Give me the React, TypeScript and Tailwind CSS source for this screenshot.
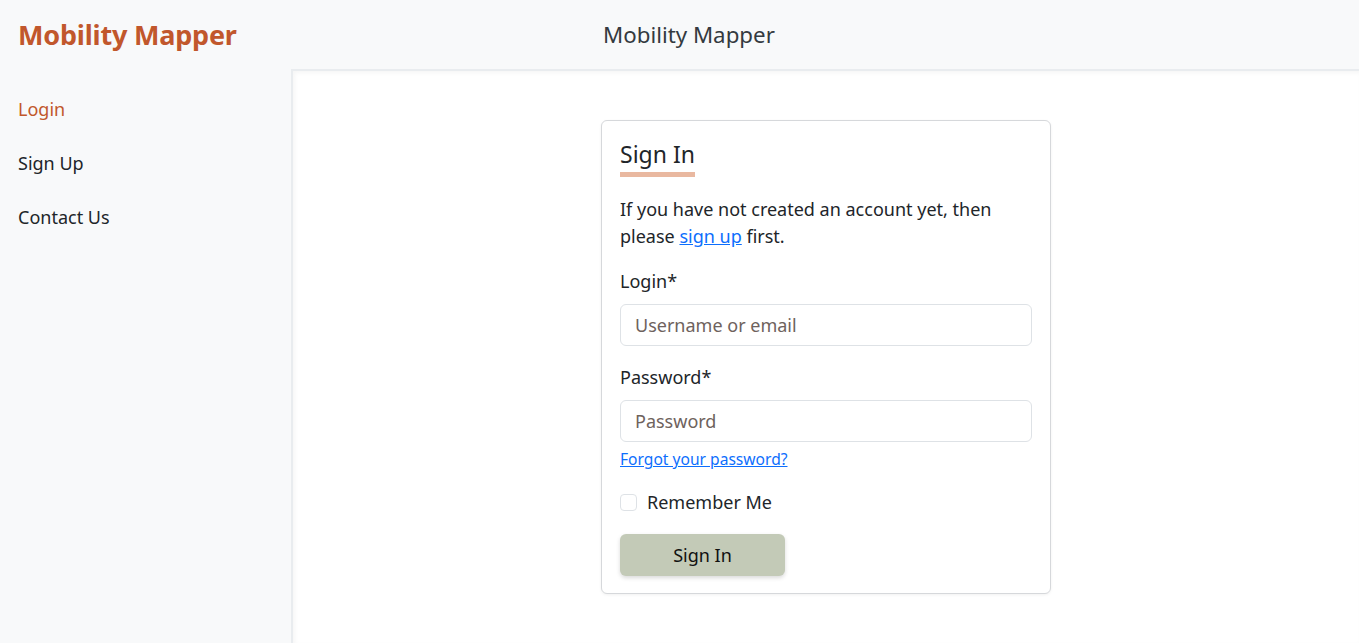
import React from 'react';

const navItems = [
  { label: 'Login', active: true },
  { label: 'Sign Up', active: false },
  { label: 'Contact Us', active: false },
];

export default function App() {
  return (
    <div
      className="min-h-screen h-screen flex flex-col bg-[#f8f9fa] text-[#212529]"
      style={{ fontFamily: '"Noto Sans", "Open Sans", sans-serif' }}
    >
      {/* top bar */}
      <header className="h-[69px] flex items-center pl-[18px] shrink-0">
        <a href="#" className="w-[220px] whitespace-nowrap text-[27px] font-bold text-[#c1572c] leading-none tracking-[-0.2px]">
          Mobility Mapper
        </a>
        <span className="ml-[365px] text-[22.3px] text-[#343a40]">Mobility Mapper</span>
      </header>

      <div className="flex flex-1 min-h-0">
        {/* sidebar */}
        <nav className="w-[291px] shrink-0 pl-[18px] pt-[27px] flex flex-col gap-[27px]">
          {navItems.map((item) => (
            <a
              key={item.label}
              href="#"
              className={
                item.active
                  ? 'text-[18px] leading-[27px] text-[#c1572c]'
                  : 'text-[18px] leading-[27px] text-[#212529]'
              }
            >
              {item.label}
            </a>
          ))}
        </nav>

        {/* main content */}
        <main className="flex-1 bg-white border-l-2 border-t-2 border-[#e9ecef] shadow-[inset_2px_2px_4px_rgba(0,0,0,0.04)] flex justify-center pt-[49px]">
          <div className="w-[450px] self-start bg-white border border-[#d6d8db] rounded-[6px] shadow-[0_1px_3px_rgba(0,0,0,0.06)] px-[18px] pt-[17px] pb-[17px]">
            <h2 className="inline-block text-[23px] leading-[32px] font-normal pb-[2px] border-b-[5px] border-[#e9b8a0]">
              Sign In
            </h2>
            <p className="mt-[19px] text-[18px] leading-[27px]">
              If you have not created an account yet, then please{' '}
              <a href="#" className="text-[#0d6efd] underline">
                sign up
              </a>{' '}
              first.
            </p>

            <label className="block mt-[18px] text-[18px] leading-[27px]">Login*</label>
            <input
              type="text"
              placeholder="Username or email"
              className="mt-[9px] block w-full h-[42px] px-[14px] text-[18px] border border-[#dee2e6] rounded-[6px] outline-none placeholder:text-[#6e625d]"
            />

            <label className="block mt-[18px] text-[18px] leading-[27px]">Password*</label>
            <input
              type="password"
              placeholder="Password"
              className="mt-[9px] block w-full h-[42px] px-[14px] text-[18px] border border-[#dee2e6] rounded-[6px] outline-none placeholder:text-[#6e625d]"
            />

            <a href="#" className="block mt-[6px] text-[15.6px] leading-[22px] text-[#0d6efd] underline">
              Forgot your password?
            </a>

            <label className="mt-[19px] flex items-center gap-[10px] text-[18px] leading-[27px]">
              <span className="w-[17px] h-[17px] border border-[#dee2e6] rounded-[4px] bg-white inline-block" />
              Remember Me
            </label>

            <button
              type="button"
              className="mt-[18px] w-[165px] h-[42px] rounded-[6px] bg-[#c3cab7] text-[18px] text-[#111] shadow-[0_2px_4px_rgba(0,0,0,0.15)]"
            >
              Sign In
            </button>
          </div>
        </main>
      </div>
    </div>
  );
}
